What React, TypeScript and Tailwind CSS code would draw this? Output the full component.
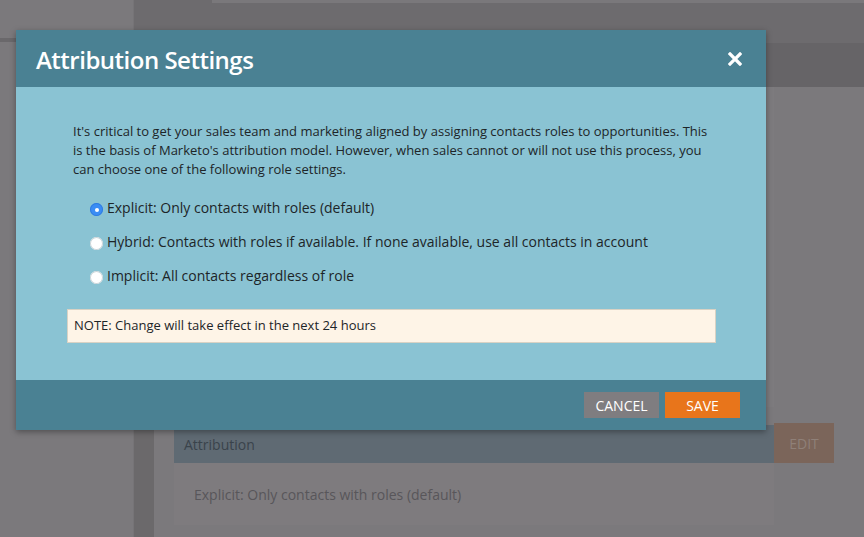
import React, { useState } from 'react';

const options = [
  { id: 'explicit', label: 'Explicit: Only contacts with roles (default)' },
  { id: 'hybrid', label: 'Hybrid: Contacts with roles if available. If none available, use all contacts in account' },
  { id: 'implicit', label: 'Implicit: All contacts regardless of role' },
];

export default function App() {
  const [role, setRole] = useState('explicit');

  return (
    <div className="relative h-[537px] w-[864px] overflow-hidden bg-[#7b797c] font-['Open_Sans',sans-serif]">
      {/* page behind the overlay */}
      <div className="flex h-full">
        <div className="flex w-[134px] flex-col border-r border-[#767477]">
          <div className="mt-[38px] h-[4px] w-[16px] bg-[#6a686b]" />
        </div>
        <div className="flex flex-1 flex-col">
          <div className="h-[43px] bg-[#6d6b6e]">
            <div className="ml-[78px] h-[3px] bg-[#7a787b]" />
          </div>
          <div className="flex flex-1">
            <div className="w-[20px] bg-[#6b696b]" />
            <div className="flex flex-1 flex-col pl-[20px]">
              <div className="h-[44px] bg-[#666467]" />
              <div className="mr-[90px] h-[320px] bg-[#7d7b7e]" />
              <div className="mt-[16px] flex w-[660px] items-stretch">
                <div className="mt-[2px] flex h-[38px] flex-1 items-center bg-[#5f6a73] px-[10px] text-[14px] text-[#3a434b]">
                  Attribution
                </div>
                <div className="flex h-[40px] w-[60px] items-center justify-center bg-[#7b655a] text-[14px] text-[#8f8078]">
                  EDIT
                </div>
              </div>
              <div className="flex h-[62px] w-[600px] items-center bg-[#7e7b7e] px-[20px] text-[14px] text-[#58565a]">
                Explicit: Only contacts with roles (default)
              </div>
            </div>
          </div>
        </div>
      </div>

      {/* modal */}
      <div className="absolute left-[16px] top-[30px] flex w-[750px] flex-col shadow-[0_2px_6px_rgba(0,0,0,0.35)]">
        <div className="flex h-[57px] items-center justify-between bg-[#4a8193] pl-[20px] pr-[24px]">
          <h2 className="mt-[2px] text-[24px] font-semibold tracking-[-0.5px] text-white">Attribution Settings</h2>
          <button className="text-white" aria-label="Close">
            <svg width="14" height="14" viewBox="0 0 14 14">
              <path d="M2 2 L12 12 M12 2 L2 12" stroke="white" strokeWidth="3.2" strokeLinecap="square" />
            </svg>
          </button>
        </div>

        <div className="flex h-[293px] flex-col bg-[#8ac3d3] pl-[51px] pr-[50px] pt-[35px] text-[#1d2528]">
          <p className="ml-[6px] text-[13px] leading-[19px]">
            It's critical to get your sales team and marketing aligned by assigning contacts roles to opportunities. This
            is the basis of Marketo's attribution model. However, when sales cannot or will not use this process, you
            can choose one of the following role settings.
          </p>

          <div className="ml-[23px] mt-[18px] flex flex-col gap-[14px]">
            {options.map((o) => (
              <label key={o.id} className="flex h-[20px] cursor-pointer items-center text-[14px]">
                <span
                  className={`mt-[5px] mr-[4px] flex h-[13px] w-[13px] items-center justify-center rounded-full ${
                    role === o.id ? 'bg-[#3b8df4] shadow-[inset_0_0_0_1px_#2f7ce0]' : 'bg-white shadow-[inset_0_0_0_1px_#c9d4d8]'
                  }`}
                  onClick={() => setRole(o.id)}
                >
                  {role === o.id && <span className="h-[4px] w-[4px] rounded-full bg-white" />}
                </span>
                <span onClick={() => setRole(o.id)}>{o.label}</span>
              </label>
            ))}
          </div>

          <div className="mt-[24px] flex h-[34px] items-center border border-[#d9d2c4] bg-[#fef4e7] px-[6px] text-[13px] text-[#1d2528]">
            NOTE: Change will take effect in the next 24 hours
          </div>
        </div>

        <div className="flex h-[50px] items-center justify-end gap-[6px] bg-[#4a8193] pr-[26px]">
          <button className="h-[26px] w-[75px] bg-[#7f7d80] text-[14px] text-white">CANCEL</button>
          <button className="h-[26px] w-[75px] bg-[#e8751b] text-[14px] text-white">SAVE</button>
        </div>
      </div>
    </div>
  );
}
